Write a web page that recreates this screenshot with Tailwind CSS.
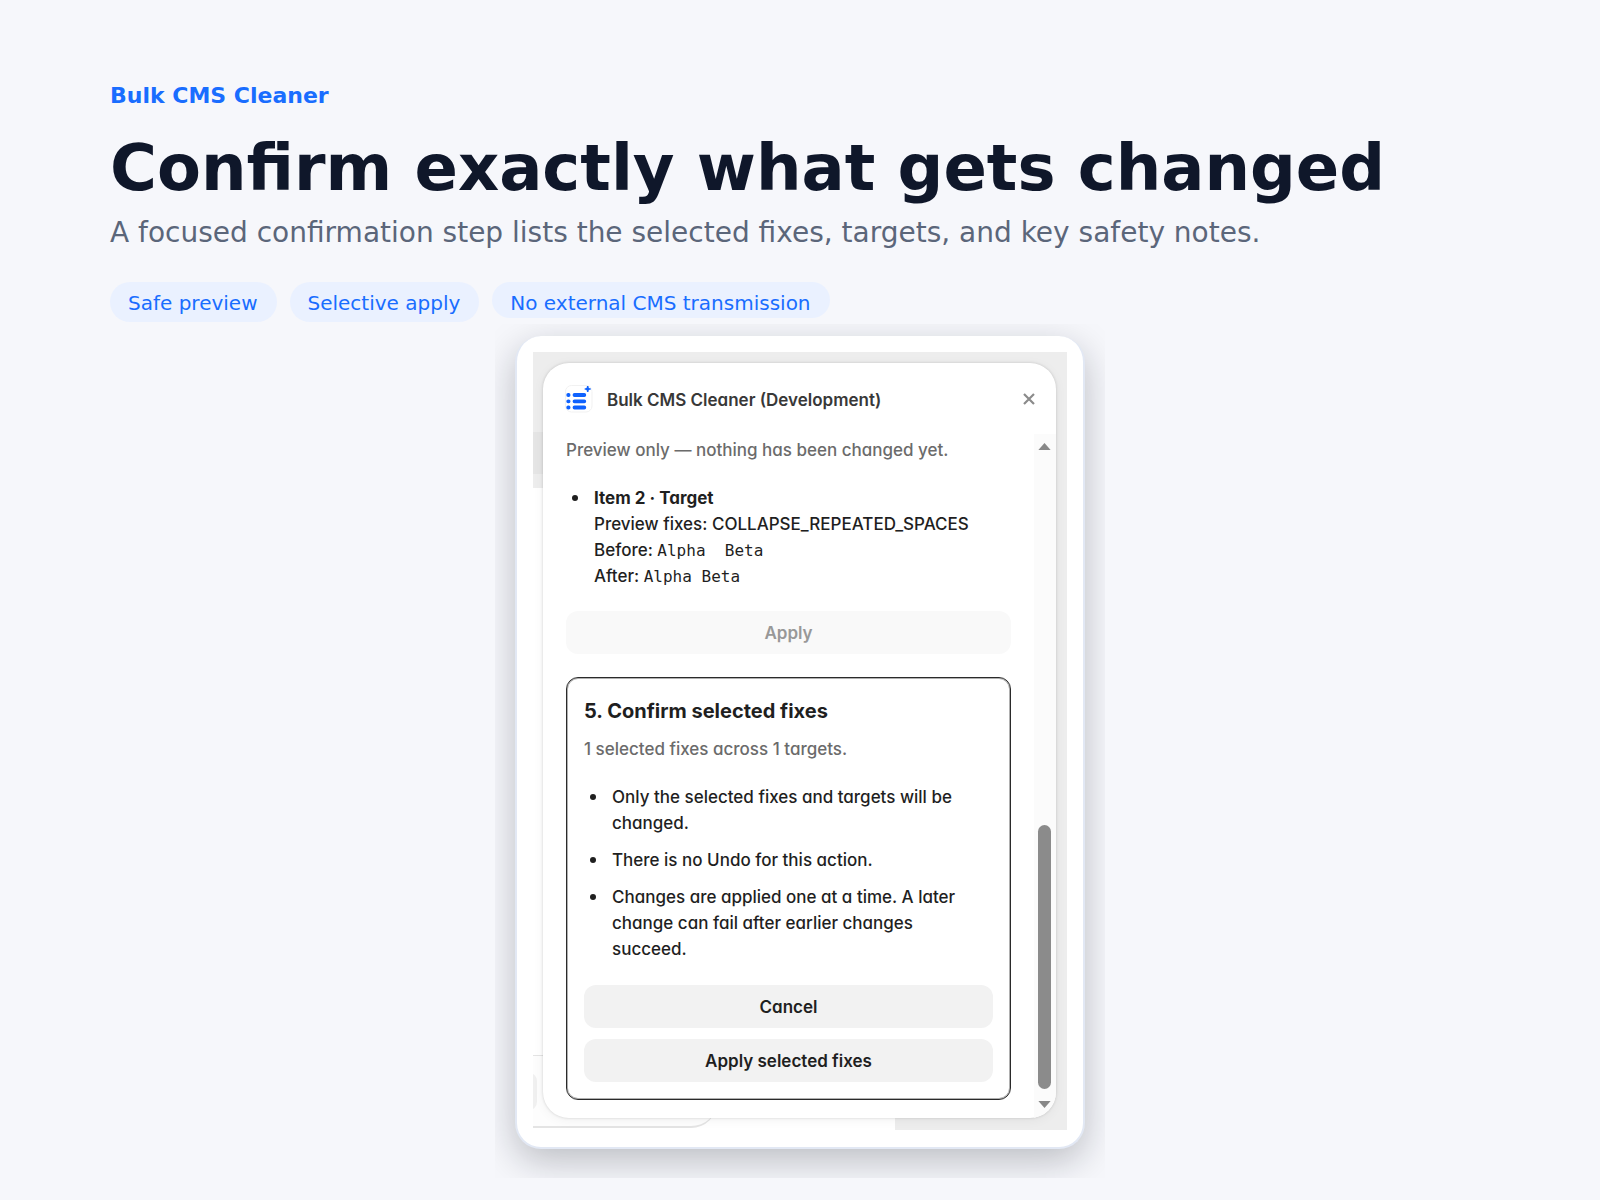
<!DOCTYPE html>
<html lang="en">
<head>
  <meta charset="UTF-8" />
  <meta name="viewport" content="width=device-width, initial-scale=1" />
  <title>Bulk CMS Cleaner</title>
  <script src="https://cdn.jsdelivr.net/npm/@tailwindcss/browser@4"></script>
</head>
<body class="bg-[#f6f7fb] min-h-screen overflow-x-hidden font-['DejaVu_Sans',sans-serif]">
  <header class="px-[110px] pt-[81px]">
    <p class="text-[22px] leading-[30px] font-bold text-[#196dff]">Bulk CMS Cleaner</p>
    <h1 class="mt-[19px] text-[64px] leading-[76px] font-bold text-[#0f172a]">Confirm exactly what gets changed</h1>
    <p class="mt-[9px] text-[28px] leading-9 text-[#5b667a]">A focused confirmation step lists the selected fixes, targets, and key safety notes.</p>
    <ul class="mt-[31px] h-[42px] flex items-start gap-[13px] text-[20px] leading-[42px] text-[#196dff] whitespace-nowrap">
      <li class="h-10 pl-[18px] pr-[19px] rounded-[20px] bg-[#eaf1ff]">Safe preview</li>
      <li class="h-10 pl-[18px] pr-[19px] rounded-[20px] bg-[#eaf1ff]">Selective apply</li>
      <li class="h-9 pl-[18px] pr-[19px] rounded-[18px] bg-[#eaf1ff]">No external CMS transmission</li>
    </ul>
  </header>

  <!-- Framed panel -->
  <main class="mx-auto w-[610px] max-w-full overflow-hidden px-5 pt-3 pb-[29px]">
    <div class="rounded-[26px] border-2 border-t-0 border-[#e2e8f4] bg-white px-4 pt-4 pb-[17px] shadow-[0_12px_36px_rgba(15,20,32,0.25)]">
      <div class="relative overflow-hidden bg-[#ededed] pt-[11px] pr-[11px] pb-3 pl-[10px]">

        <!-- Page behind the dialog -->
        <div class="absolute left-0 top-20 h-[42px] w-8 bg-[#e5e5e5]"></div>
        <div class="absolute left-0 top-[136px] bottom-0 w-[362px] bg-white"></div>
        <div class="absolute -left-8 bottom-[2px] h-[73px] w-[216px] rounded-br-[26px] border-t border-b-2 border-[#e4e4e4] bg-[#fdfdfd]"></div>
        <div class="absolute -left-5 bottom-5 h-[37px] w-6 rounded-lg bg-[#f0f0f0]"></div>

        <section class="relative overflow-hidden rounded-[26px] bg-white font-[Inter,sans-serif] text-[17px] leading-[26px] font-medium text-[#1f1f1f] shadow-[0_0_3px_rgba(0,0,0,0.16),0_2px_12px_rgba(0,0,0,0.05)] [font-feature-settings:'cv11']">
          <div class="flex h-[71px] items-center gap-[14px] pr-[21px] pl-[22px]">
            <svg class="size-7" viewBox="0 0 28 28" fill="none">
              <rect x="0.5" y="0.5" width="26.500" height="26.500" rx="6" fill="#fff" stroke="#f1f1f1" />
              <g stroke="#0f62fe" stroke-width="3.800" stroke-linecap="round">
                <path d="M9.500 10h9.800M9.500 16.300h9.800M9.500 22.500h9.800" />
                <path d="M3.200 10h.4M3.200 16.300h.4M3.200 22.500h.4" />
              </g>
              <path d="M22.700 1v6M19.700 4h6" stroke="#0f62fe" stroke-width="1.600" />
              <circle cx="22.700" cy="4" r="1.800" fill="#0f62fe" />
            </svg>
            <h2 class="flex-1 pt-0.5 font-semibold text-[#383838]">Bulk CMS Cleaner (Development)</h2>
            <button aria-label="Close" class="text-[#8b8b8b]">
              <svg class="size-3" viewBox="0 0 12 12" fill="none" stroke="currentColor" stroke-width="2.200"><path d="M1 1l10 10M11 1L1 11" /></svg>
            </button>
          </div>

          <div class="flex">
            <div class="min-w-0 flex-1 pt-[3px] pr-[23px] pb-[18px] pl-[23px]">
              <p class="text-[#6b6b6b]">Preview only — nothing has been changed yet.</p>

              <ul class="mt-[22px] pl-7">
                <li class="relative before:absolute before:top-[10px] before:-left-[22px] before:size-1.5 before:rounded-full before:bg-[#1f1f1f]">
                  <strong class="font-bold">Item 2 · Target</strong><br />
                  Preview fixes: COLLAPSE_REPEATED_SPACES<br />
                  Before: <code class="whitespace-pre font-['DejaVu_Sans_Mono',monospace] text-base leading-none font-normal">Alpha  Beta</code><br />
                  After: <code class="whitespace-pre font-['DejaVu_Sans_Mono',monospace] text-base leading-none font-normal">Alpha Beta</code>
                </li>
              </ul>

              <button disabled class="mt-[22px] h-[43px] w-full rounded-xl bg-[#f9f9f9] font-semibold text-[#989898]">Apply</button>

              <div class="mt-[23px] rounded-xl border border-[#2a2a2a] p-[17px] shadow-[inset_0_0_0_1px_#b0b0b0]">
                <h3 class="mt-0.5 text-[20px] leading-7 font-bold">5. Confirm selected fixes</h3>
                <p class="mt-[11px] text-[#6b6b6b]">1 selected fixes across 1 targets.</p>
                <ul class="mt-[22px] flex flex-col gap-[11px] pr-4 pl-7">
                  <li class="relative before:absolute before:top-[10px] before:-left-[22px] before:size-1.5 before:rounded-full before:bg-[#1f1f1f]">Only the selected fixes and targets will be changed.</li>
                  <li class="relative before:absolute before:top-[10px] before:-left-[22px] before:size-1.5 before:rounded-full before:bg-[#1f1f1f]">There is no Undo for this action.</li>
                  <li class="relative before:absolute before:top-[10px] before:-left-[22px] before:size-1.5 before:rounded-full before:bg-[#1f1f1f]">Changes are applied one at a time. A later change can fail after earlier changes succeed.</li>
                </ul>
                <div class="mt-[23px] flex flex-col gap-[11px]">
                  <button class="h-[43px] rounded-xl bg-[#f2f2f2] font-semibold">Cancel</button>
                  <button class="h-[43px] rounded-xl bg-[#f2f2f2] font-semibold">Apply selected fixes</button>
                </div>
              </div>
            </div>

            <!-- Scrollbar -->
            <div class="flex w-[22px] flex-col items-center bg-[#fbfbfb] pt-[9px] pr-px pb-[10px]">
              <svg class="h-[7px] w-[13px]" viewBox="0 0 14 8" fill="#888"><path d="M0 8L7 0l7 8z" /></svg>
              <div class="mt-auto h-[264px] w-[13px] rounded-full bg-[#8b8b8b]"></div>
              <svg class="mt-3 h-[7px] w-[13px]" viewBox="0 0 14 8" fill="#888"><path d="M0 0l7 8 7-8z" /></svg>
            </div>
          </div>
        </section>
      </div>
    </div>
  </main>
</body>
</html>
